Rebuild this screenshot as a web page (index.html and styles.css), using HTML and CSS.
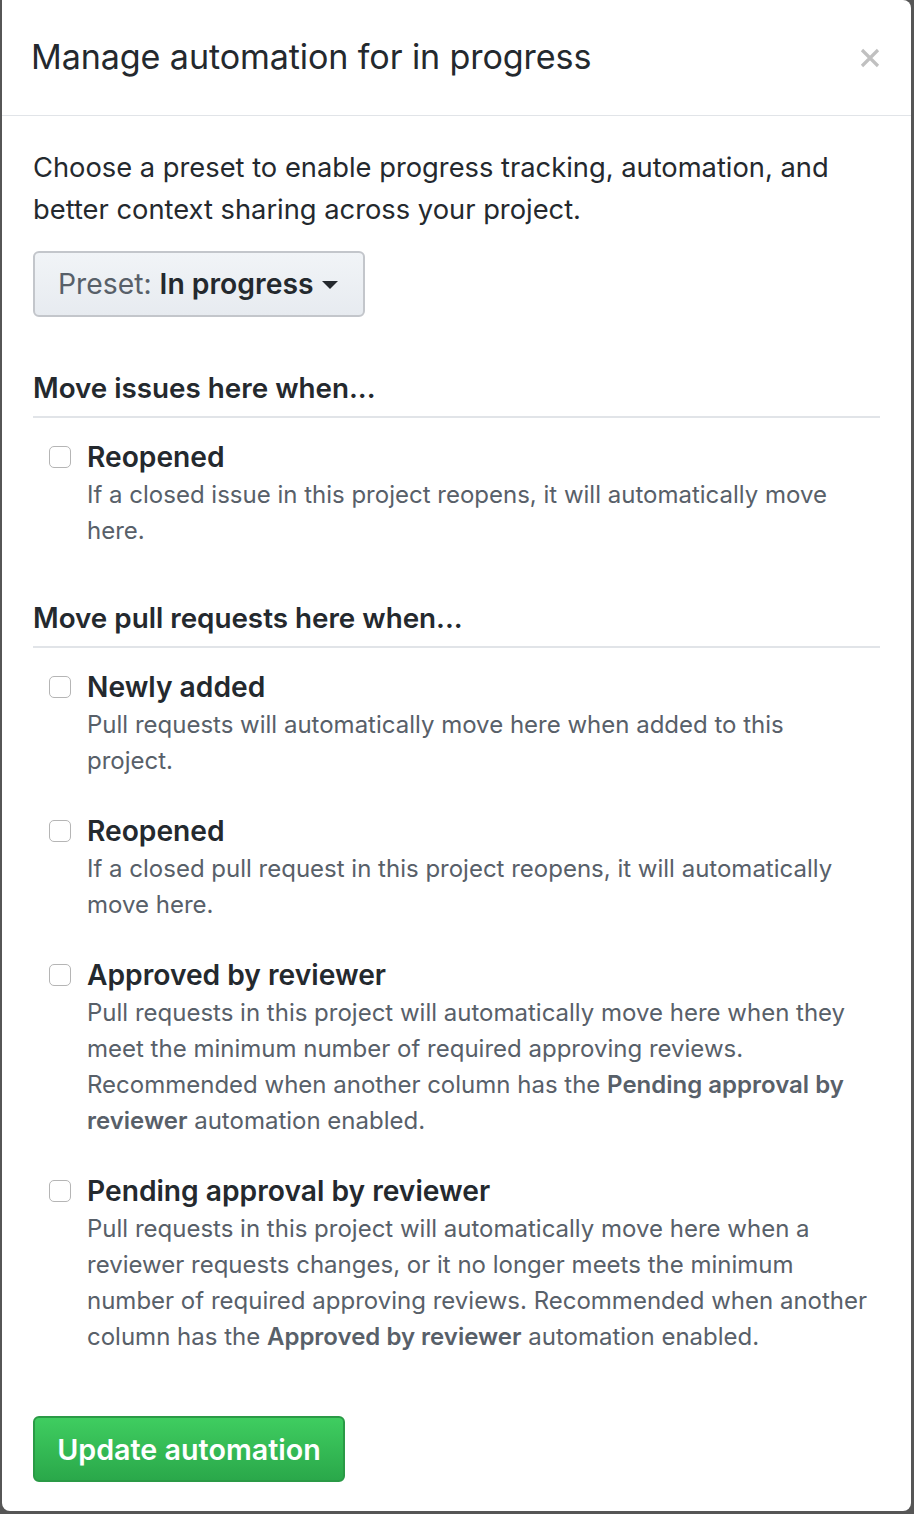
FILE: index.html
```html
<!DOCTYPE html>
<html>
<head>
<meta charset="utf-8">
<link rel="stylesheet" href="styles.css">
</head>
<body>
<div class="dialog">
  <div class="dialog-header">
    <h1 class="title">Manage automation for in progress</h1>
    <button class="close" aria-label="Close">
      <svg width="22" height="22" viewBox="0 0 22 22"><path d="M3 3 L19 19 M19 3 L3 19" stroke="#c0c0c0" stroke-width="3.2" stroke-linecap="butt"/></svg>
    </button>
  </div>
  <div class="dialog-body">
    <p class="intro">Choose a preset to enable progress tracking, automation, and better context sharing across your project.</p>
    <button class="preset"><span class="preset-text"><span class="preset-key">Preset:</span> <strong>In progress</strong></span><span class="caret"></span></button>

    <section class="group">
      <h2 class="group-title">Move issues here when...</h2>
      <div class="option">
        <span class="check"></span>
        <div class="option-text">
          <div class="option-label">Reopened</div>
          <div class="option-desc">If a closed issue in this project reopens, it will automatically move here.</div>
        </div>
      </div>
    </section>

    <section class="group">
      <h2 class="group-title">Move pull requests here when...</h2>
      <div class="option">
        <span class="check"></span>
        <div class="option-text">
          <div class="option-label">Newly added</div>
          <div class="option-desc">Pull requests will automatically move here when added to this project.</div>
        </div>
      </div>
      <div class="option">
        <span class="check"></span>
        <div class="option-text">
          <div class="option-label">Reopened</div>
          <div class="option-desc">If a closed pull request in this project reopens, it will automatically move here.</div>
        </div>
      </div>
      <div class="option">
        <span class="check"></span>
        <div class="option-text">
          <div class="option-label">Approved by reviewer</div>
          <div class="option-desc">Pull requests in this project will automatically move here when they meet the minimum number of required approving reviews. Recommended when another column has the <b>Pending approval by reviewer</b> automation enabled.</div>
        </div>
      </div>
      <div class="option">
        <span class="check"></span>
        <div class="option-text">
          <div class="option-label">Pending approval by reviewer</div>
          <div class="option-desc">Pull requests in this project will automatically move here when a reviewer requests changes, or it no longer meets the minimum number of required approving reviews. Recommended when another column has the <b>Approved by reviewer</b> automation enabled.</div>
        </div>
      </div>
    </section>

    <button class="submit">Update automation</button>
  </div>
</div>
</body>
</html>
```

FILE: styles.css
```css
html, body {
  margin: 0;
  padding: 0;
  background: #565656;
}
body {
  font-family: Inter, "Liberation Sans", sans-serif;
  color: #24292e;
  width: 914px;
  height: 1514px;
  overflow: hidden;
}
.dialog {
  margin-left: 2px;
  width: 909px;
  height: 1511px;
  background: #fff;
  border-radius: 0 8px 8px 8px;
  box-sizing: border-box;
  overflow: hidden;
}
.dialog-header {
  height: 115px;
  border-bottom: 1px solid #e1e4e8;
  display: flex;
  align-items: center;
  justify-content: space-between;
  padding: 0 30px 0 29px;
  box-sizing: content-box;
}
.title {
  margin: 0;
  font-size: 34.1px;
  font-weight: 400;
  letter-spacing: -0.1px;
  line-height: 40px;
  padding-bottom: 2px;
}
.close {
  border: 0;
  background: none;
  padding: 0;
  width: 22px;
  height: 22px;
  display: flex;
}
.dialog-body {
  padding: 31px 31px 30px 31px;
}
.intro {
  margin: 0;
  font-size: 27.3px;
  line-height: 42px;
  width: 830px;
}
.preset {
  margin-top: 20px;
  height: 66px;
  width: 332px;
  padding: 0 0 0 23px;
  border: 2px solid #c3c6cb;
  border-radius: 6px;
  background: linear-gradient(#f1f4f7, #e7ebf0);
  font-family: inherit;
  font-size: 28.3px;
  color: #24292e;
  display: flex;
  align-items: center;
}
.preset-text {
  white-space: pre;
}
.preset-key {
  color: #586069;
}
.preset strong {
  font-weight: 600;
}
.caret {
  display: inline-block;
  margin-left: 9px;
  margin-top: 2px;
  width: 0;
  height: 0;
  border-left: 8px solid transparent;
  border-right: 8px solid transparent;
  border-top: 8px solid #24292e;
}
.group {
  margin-top: 51px;
}
.group + .group {
  margin-top: 49px;
}
.group-title {
  margin: 0 0 19px 0;
  font-size: 27.8px;
  font-weight: 600;
  line-height: 40px;
  padding-bottom: 8px;
  border-bottom: 2px solid #e1e4e8;
}
.option {
  display: flex;
  align-items: flex-start;
  margin-bottom: 32px;
}
.check {
  flex: none;
  width: 20px;
  height: 20px;
  border: 1.5px solid #b5b5b5;
  border-radius: 5px;
  margin: 9px 16px 0 16px;
  background: #fff;
}
.option-text {
  width: 784px;
}
.option-label {
  font-size: 28.2px;
  font-weight: 600;
  line-height: 40px;
}
.option-desc {
  font-size: 24px;
  line-height: 36px;
  color: #586069;
}
.option-desc b {
  font-weight: 600;
}
.submit {
  display: block;
  margin-top: 61px;
  width: 312px;
  height: 66px;
  border: 2px solid #2a9a46;
  border-radius: 6px;
  background: linear-gradient(#3fcd60, #2aa84a);
  color: #fff;
  font-family: inherit;
  font-size: 28.7px;
  font-weight: 600;
  padding: 0;
}
```
